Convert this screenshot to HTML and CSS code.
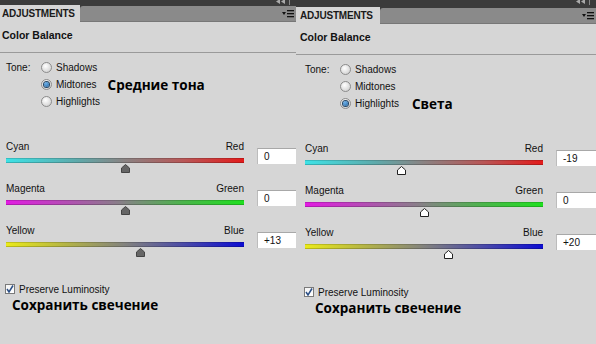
FILE: index.html
```html
<!DOCTYPE html>
<html>
<head>
    <title>Color Balance</title>
    <meta name="viewport" content="width=device-width, initial-scale=1.0">
    <link rel="stylesheet" href="styles.css">
</head>
<body>
    <div class="panel panel-left">
        <div class="titlebar">
            <svg class="bar-icons" width="20" height="7" viewBox="0 0 20 7"><path d="M6 1 L2 3.5 L6 6 Z M11 1 L7 3.5 L11 6 Z" fill="#aaa"/><rect x="15" y="0" width="1" height="7" fill="#888"/></svg>
        </div>
        <div class="tabs">
            <div class="tab">ADJUSTMENTS</div>
            <div class="tab-rest">
                <svg class="menu-icon" width="12" height="8" viewBox="0 0 12 8"><path d="M0 2 H4 L2 5 Z" fill="#111"/><rect x="5" y="0" width="7" height="1.3" fill="#111"/><rect x="5" y="3" width="7" height="1.3" fill="#111"/><rect x="5" y="6" width="7" height="1.3" fill="#111"/></svg>
            </div>
        </div>
        <div class="header">Color Balance</div>
        <div class="tone">
            <div class="tone-label">Tone:</div>
            <div class="tone-options">
                <div class="radio-row"><span class="radio"></span>Shadows</div>
                <div class="radio-row"><span class="radio checked"></span>Midtones<span class="note">Средние тона</span></div>
                <div class="radio-row"><span class="radio"></span>Highlights</div>
            </div>
        </div>
        <div class="sliders">
            <div class="slider">
                <div class="slider-labels"><span>Cyan</span><span>Red</span></div>
                <div class="track track-cr"><svg class="thumb" style="left: 50%" width="9" height="9" viewBox="0 0 9 9"><path d="M4.5 0.5 L8.5 4 V8.5 H0.5 V4 Z"/></svg></div>
            </div>
            <div class="value">0</div>
            <div class="slider">
                <div class="slider-labels"><span>Magenta</span><span>Green</span></div>
                <div class="track track-mg"><svg class="thumb" style="left: 50%" width="9" height="9" viewBox="0 0 9 9"><path d="M4.5 0.5 L8.5 4 V8.5 H0.5 V4 Z"/></svg></div>
            </div>
            <div class="value">0</div>
            <div class="slider">
                <div class="slider-labels"><span>Yellow</span><span>Blue</span></div>
                <div class="track track-yb"><svg class="thumb" style="left: 56.5%" width="9" height="9" viewBox="0 0 9 9"><path d="M4.5 0.5 L8.5 4 V8.5 H0.5 V4 Z"/></svg></div>
            </div>
            <div class="value">+13</div>
        </div>
        <div class="preserve">
            <div class="check-row"><span class="checkbox"><svg width="8" height="8" viewBox="0 0 8 8"><path d="M1 4 L3 7 L7 0.5" fill="none" stroke="#2b4f86" stroke-width="1.5"/></svg></span>Preserve Luminosity</div>
            <div class="note-big">Сохранить свечение</div>
        </div>
    </div>

    <div class="panel panel-right">
        <div class="titlebar">
            <svg class="bar-icons" width="20" height="7" viewBox="0 0 20 7"><path d="M6 1 L2 3.5 L6 6 Z M11 1 L7 3.5 L11 6 Z" fill="#aaa"/><rect x="15" y="0" width="1" height="7" fill="#888"/></svg>
        </div>
        <div class="tabs">
            <div class="tab">ADJUSTMENTS</div>
            <div class="tab-rest">
                <svg class="menu-icon" width="12" height="8" viewBox="0 0 12 8"><path d="M0 2 H4 L2 5 Z" fill="#111"/><rect x="5" y="0" width="7" height="1.3" fill="#111"/><rect x="5" y="3" width="7" height="1.3" fill="#111"/><rect x="5" y="6" width="7" height="1.3" fill="#111"/></svg>
            </div>
        </div>
        <div class="header">Color Balance</div>
        <div class="tone">
            <div class="tone-label">Tone:</div>
            <div class="tone-options">
                <div class="radio-row"><span class="radio"></span>Shadows</div>
                <div class="radio-row"><span class="radio"></span>Midtones</div>
                <div class="radio-row"><span class="radio checked"></span>Highlights<span class="note">Света</span></div>
            </div>
        </div>
        <div class="sliders">
            <div class="slider">
                <div class="slider-labels"><span>Cyan</span><span>Red</span></div>
                <div class="track track-cr"><svg class="thumb" style="left: 40.5%" width="9" height="9" viewBox="0 0 9 9"><path d="M4.5 0.5 L8.5 4 V8.5 H0.5 V4 Z"/></svg></div>
            </div>
            <div class="value">-19</div>
            <div class="slider">
                <div class="slider-labels"><span>Magenta</span><span>Green</span></div>
                <div class="track track-mg"><svg class="thumb" style="left: 50%" width="9" height="9" viewBox="0 0 9 9"><path d="M4.5 0.5 L8.5 4 V8.5 H0.5 V4 Z"/></svg></div>
            </div>
            <div class="value">0</div>
            <div class="slider">
                <div class="slider-labels"><span>Yellow</span><span>Blue</span></div>
                <div class="track track-yb"><svg class="thumb" style="left: 60%" width="9" height="9" viewBox="0 0 9 9"><path d="M4.5 0.5 L8.5 4 V8.5 H0.5 V4 Z"/></svg></div>
            </div>
            <div class="value">+20</div>
        </div>
        <div class="preserve">
            <div class="check-row"><span class="checkbox"><svg width="8" height="8" viewBox="0 0 8 8"><path d="M1 4 L3 7 L7 0.5" fill="none" stroke="#2b4f86" stroke-width="1.5"/></svg></span>Preserve Luminosity</div>
            <div class="note-big">Сохранить свечение</div>
        </div>
    </div>
</body>
</html>
```

FILE: styles.css
```css
* {
    margin: 0;
    padding: 0;
    box-sizing: border-box;
}

html, body {
    width: 100%;
    height: 100%;
    overflow: hidden;
}

body {
    display: flex;
    background: #d6d6d6;
    font-family: "Liberation Sans", Arial, sans-serif;
    font-size: 10px;
    color: #111;
}

.panel {
    flex: none;
    display: flex;
    flex-direction: column;
    overflow: hidden;
}

.panel-left {
    width: 299px;
    margin-left: -3px;
}

.panel-right {
    width: 300px;
}

.titlebar {
    position: relative;
    height: 5px;
    background: #3b3b3b;
}

.panel-right .titlebar {
    height: 7px;
}

.bar-icons {
    position: absolute;
    right: 2px;
    top: -2px;
}

.tabs {
    display: flex;
    height: 17px;
    background: #3b3b3b;
}

.tab {
    width: 84px;
    padding-left: 4px;
    background: #d6d6d6;
    font-weight: bold;
    line-height: 18px;
    letter-spacing: -0.2px;
    color: #1a1a1a;
}

.panel-left .tab {
    width: 83px;
    padding-left: 5px;
}

.tab-rest {
    flex: 1;
    display: flex;
    justify-content: flex-end;
    align-items: center;
    margin-top: 1px;
    padding-right: 2px;
    background: #8a8a8a;
    border-top-left-radius: 3px;
    border-bottom: 1px solid #777;
}

.header {
    height: 31px;
    padding: 7px 0 0 4px;
    font-weight: bold;
    font-size: 10.5px;
    border-bottom: 1px solid #9a9a9a;
}

.panel-left .header {
    padding-left: 5px;
}

.tone {
    display: flex;
    margin-top: 6px;
    padding-left: 9px;
}

.tone-label {
    width: 35px;
    line-height: 17px;
}

.radio-row {
    display: flex;
    align-items: center;
    height: 17px;
}

.radio {
    width: 11px;
    height: 11px;
    margin-right: 4px;
    border-radius: 50%;
    border: 1px solid #8c8c8c;
    background: radial-gradient(circle at 40% 35%, #ffffff, #d8d8d8 70%, #c4c4c4);
    display: flex;
    align-items: center;
    justify-content: center;
}

.radio.checked::after {
    content: "";
    width: 5px;
    height: 5px;
    border-radius: 50%;
    background: radial-gradient(circle at 40% 35%, #6fb2ea, #1c5e9c);
    box-shadow: 0 0 0 1px #264766;
}

.note {
    margin-left: 11px;
    font-family: "Open Sans", "DejaVu Sans", sans-serif;
    font-weight: bold;
    font-size: 13.5px;
    color: #000;
}

.panel-right .note {
    margin-left: 13px;
    margin-top: 1px;
}

.sliders {
    display: grid;
    grid-template-columns: 238px 40px;
    column-gap: 13px;
    margin-top: 30px;
    padding-left: 9px;
}

.slider {
    height: 42px;
}

.slider-labels {
    display: flex;
    justify-content: space-between;
    line-height: 14px;
}

.track {
    position: relative;
    height: 5px;
    margin-top: 4px;
    box-shadow: inset 0 1px 0 rgba(0, 0, 0, 0.15), inset 0 -1px 0 rgba(0, 0, 0, 0.2);
}

.track-cr {
    background: linear-gradient(to right, #3de2e6, #5fa9aa 30%, #8a8282 50%, #b95656 75%, #e31b1b);
}

.track-mg {
    background: linear-gradient(to right, #e21be2, #b44db4 25%, #848484 50%, #4ab54a 75%, #1fe01f);
}

.track-yb {
    background: linear-gradient(to right, #eaea1a, #b4b446 25%, #82827e 50%, #4a4aa8 75%, #0c0cd2);
}

.thumb {
    position: absolute;
    top: 6px;
    margin-left: -4px;
}

.panel-left .thumb path {
    fill: #666;
    stroke: #444;
    stroke-width: 1;
}

.panel-right .thumb path {
    fill: #fff;
    stroke: #222;
    stroke-width: 1;
}

.value {
    height: 16px;
    margin-top: 8px;
    padding: 2px 0 0 6px;
    background: #fff;
    border-top: 1px solid #a8a8a8;
    border-left: 1px solid #bcbcbc;
    line-height: 12px;
}

.preserve {
    margin-top: 16px;
    padding-left: 8px;
}

.panel-right .preserve {
    margin-top: 17px;
}

.check-row {
    display: flex;
    align-items: center;
    height: 14px;
}

.checkbox {
    width: 10px;
    height: 10px;
    margin-right: 4px;
    border: 1px solid #7a7a7a;
    background: linear-gradient(#f4f4f4, #ffffff);
    display: flex;
    align-items: center;
    justify-content: center;
}

.note-big {
    margin-left: 7px;
    font-family: "Open Sans", "DejaVu Sans", sans-serif;
    font-weight: bold;
    font-size: 13.5px;
    line-height: 18px;
    color: #000;
}

.panel-right .note-big {
    margin-left: 11px;
}
```
